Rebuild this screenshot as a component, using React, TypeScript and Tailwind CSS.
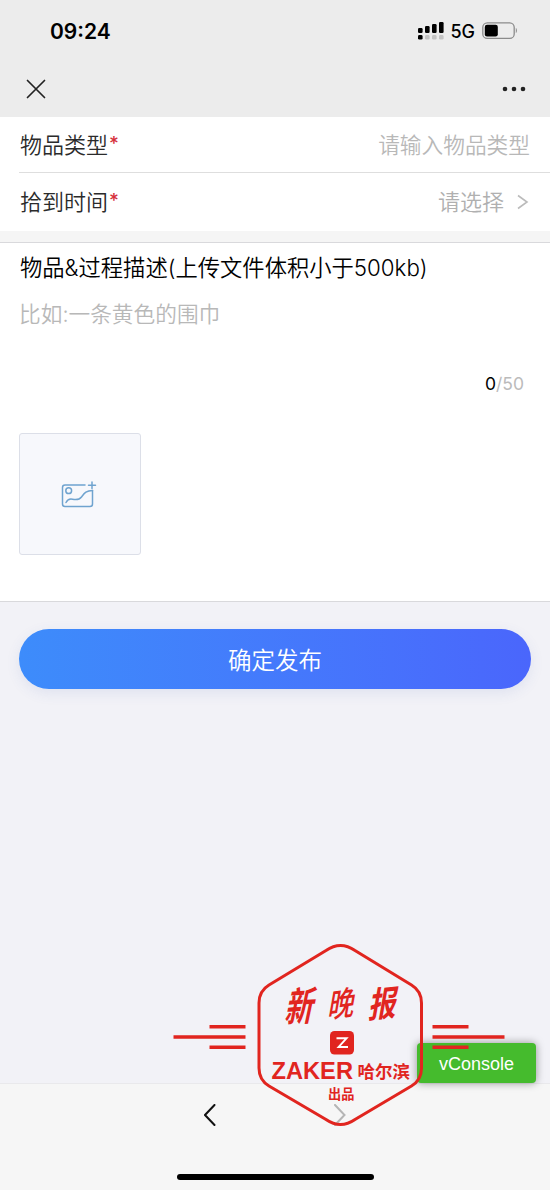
import { useState } from "react";

const CJK = "font-['Inter','Noto_Sans_CJK_SC',sans-serif]";

const SIGNAL_BARS = [
  { x: 0, y: 6, h: 5, dot: "#000" },
  { x: 7, y: 4, h: 7, dot: "#c4c4c4" },
  { x: 14, y: 2, h: 9, dot: "#c4c4c4" },
  { x: 21, y: 0, h: 11, dot: "#c4c4c4" },
];

const StatusBar = () => (
  <div className="flex h-[62px] items-center justify-between pl-[50px] pr-8">
    <span className="text-[21px] font-semibold leading-none text-black">09:24</span>
    <div className="flex items-center">
      <svg width="26" height="18" viewBox="0 0 26 18">
        {SIGNAL_BARS.map((bar) => (
          <g key={bar.x}>
            <rect x={bar.x} y={bar.y} width="4.6" height={bar.h} rx="1.2" fill="#000" />
            <rect x={bar.x} y="13" width="4.6" height="4.6" rx="1.4" fill={bar.dot} />
          </g>
        ))}
      </svg>
      <span className="relative top-px ml-[6px] text-[18px] font-medium leading-none text-black">5G</span>
      <svg className="ml-[7px]" width="36" height="18" viewBox="0 0 36 18">
        <rect x="0.8" y="0.8" width="31.4" height="15.6" rx="4.5" fill="none" stroke="#8b8b8b" strokeWidth="1.3" />
        <rect x="2.8" y="2.8" width="13" height="11.6" rx="2.2" fill="#000" />
        <path d="M33.8 6v5c1.5-.5 1.5-4.500 0-5z" fill="#8b8b8b" />
      </svg>
    </div>
  </div>
);

const NavBar = () => (
  <div className="flex h-[55px] items-center justify-between pb-[2px] pl-[26px] pr-6">
    <button type="button" aria-label="关闭">
      <svg width="20" height="20" viewBox="0 0 20 20" fill="none" stroke="#222" strokeWidth="1.7" strokeLinecap="round">
        <path d="M1.500 1.500l17 17M18.500 1.500l-17 17" />
      </svg>
    </button>
    <button type="button" aria-label="更多">
      <svg width="24" height="6" viewBox="0 0 24 6" fill="#222">
        <circle cx="3" cy="3" r="2.300" />
        <circle cx="12" cy="3" r="2.300" />
        <circle cx="21" cy="3" r="2.300" />
      </svg>
    </button>
  </div>
);

const FieldLabel = ({ text }: { text: string }) => (
  <label className="flex text-[22px] font-[350] leading-8 text-[#2b2b2b]">
    {text}
    <span className="ml-px mt-[-1px] text-[19px] font-medium text-[#d6303c]">*</span>
  </label>
);

const ImagePlusIcon = () => (
  <svg width="36" height="28" viewBox="0 0 36 28" fill="none" stroke="#6fa3cf" strokeWidth="1.5" strokeLinecap="round" strokeLinejoin="round">
    <path d="M24 4H4a2.500 2.500 0 0 0-2.500 2.500V23A2.500 2.500 0 0 0 4 25.500h25a2.500 2.500 0 0 0 2.500-2.500V9.500" />
    <circle cx="7.700" cy="9.700" r="2.900" />
    <path d="M5 21.500c1.500-3 3.500-4 6.500-3.300 4 .9 6.500 1 9-2.200 2.700-3.500 4.500-6.500 11-6.500" />
    <path d="M31 1v6.500M27.500 4.200h7" />
  </svg>
);

const Stamp = () => (
  <svg
    className="pointer-events-none absolute left-[172px] top-[940px]"
    width="334"
    height="190"
    viewBox="172 940 334 190"
    fill="#e1251f"
  >
    <path
      d="M259 1003v65q0 12 10 18l57 33.500q14.500 10 29 0l56.500-33.500q10-6 10-18v-65q0-12-10-18l-56.500-34.500q-14.500-10-29 0l-57 34.500q-10 6-10 18z"
      fill="none"
      stroke="#e1251f"
      strokeWidth="3"
    />
    <path
      d="M209.500 1026.700h36M173.500 1037h72M209.500 1047.200h36M432.500 1026.700h36M432.500 1037h72M432.500 1047.200h36"
      stroke="#e1251f"
      strokeWidth="3.500"
    />
    <g className="font-['Noto_Sans_CJK_SC',sans-serif] font-bold">
      <text transform="translate(284 1022) rotate(-4) skewX(-16) scale(.86 1.200)" fontSize="33">新</text>
      <text transform="translate(327 1018) rotate(-8) skewX(-18) scale(.86 1.060)" fontSize="31" className="font-medium">晚</text>
      <text transform="translate(368 1018) rotate(-6) skewX(-16) scale(.9 1.120)" fontSize="31">报</text>
      <text x="357.500" y="1077.500" fontSize="17.500">哈尔滨</text>
      <text x="328" y="1099" fontSize="13.200">出品</text>
    </g>
    <rect x="330" y="1031" width="24" height="23.500" rx="4.500" />
    <path d="M336.500 1038.300h10l-7.800 8.600h9.300" fill="none" stroke="#fff" strokeWidth="2" />
    <text
      x="271.500"
      y="1079"
      fontSize="23"
      textLength="81.500"
      lengthAdjust="spacingAndGlyphs"
      className="font-['Liberation_Sans',sans-serif] font-bold"
    >
      ZAKER
    </text>
  </svg>
);

const App = () => {
  const [description, setDescription] = useState("");

  return (
    <div className={`relative flex h-[1190px] w-[550px] flex-col overflow-hidden bg-[#f2f2f7] ${CJK}`}>
      <header className="h-[117px] bg-[#ececec]">
        <StatusBar />
        <NavBar />
      </header>

      <section className="h-[125px] border-b-[11px] border-[#f5f5f5] bg-white pl-[19px]">
        <div className="flex h-14 items-center justify-between border-b border-[#dedede] pl-px pr-5">
          <FieldLabel text="物品类型" />
          <input
            type="text"
            placeholder="请输入物品类型"
            className="w-[220px] text-right text-[21.700px] font-[350] leading-8 outline-none placeholder:text-[#b8b8b8]"
          />
        </div>
        <div className="flex h-[58px] items-center justify-between pl-px pr-5">
          <FieldLabel text="拾到时间" />
          <div className="flex items-center gap-[13px] text-[22px] font-[350] leading-8 text-[#b0b0b0]">
            请选择
            <svg width="13" height="16" viewBox="0 0 13 16" fill="none" stroke="#bbb" strokeWidth="1.600">
              <path d="M1 1.500l9 6.500-9 6.500" />
            </svg>
          </div>
        </div>
      </section>

      <section className="flex h-[360px] flex-col border-y border-[#d9d9dc] bg-white px-[19px]">
        <h2 className="ml-px mt-[9px] text-[22.300px] font-[350] leading-8 text-black">
          物品&amp;过程描述(上传文件体积小于500kb)
        </h2>
        <textarea
          value={description}
          onChange={(e) => setDescription(e.target.value)}
          maxLength={50}
          placeholder="比如:一条黄色的围巾"
          className="mt-[14px] h-[68px] resize-none text-[21.700px] font-[350] leading-8 outline-none placeholder:text-[#b8b8b8]"
        />
        <p className="mr-[7px] mt-1 text-right text-[17.500px] leading-7 text-[#bbb]">
          <span className="text-black">{description.length}</span>/50
        </p>
        <button
          type="button"
          aria-label="上传图片"
          className="mt-[35px] flex size-[122px] items-center justify-center rounded-[3px] border-[1.500px] border-[#dcdfe8] bg-[#f7f8fc] pr-[2px] pt-[2px]"
        >
          <ImagePlusIcon />
        </button>
      </section>

      <button
        type="button"
        className="mx-[19px] mt-[27px] h-[60px] rounded-full bg-linear-to-r from-[#3d8cfb] to-[#4a66fc] pt-[4px] text-[23.500px] font-[350] text-white shadow-[0_4px_14px_rgba(60,90,180,0.1)]"
      >
        确定发布
      </button>

      <footer className="mt-auto flex h-[107px] flex-col items-center justify-between border-t border-[#e9e9ec] bg-[#f6f6f6] pb-[10px] pt-5">
        <div className="flex w-[142px] justify-between">
          <svg width="13" height="22" viewBox="0 0 13 22" fill="none" stroke="#111" strokeWidth="2" strokeLinecap="round">
            <path d="M10.500 1L1 11l9.500 10" />
          </svg>
          <svg width="13" height="22" viewBox="0 0 13 22" fill="none" stroke="#b5b5b5" strokeWidth="2" strokeLinecap="round">
            <path d="M2 1l9.500 10L2 21" />
          </svg>
        </div>
        <div className="h-[6px] w-[197px] rounded-full bg-black" />
      </footer>

      <button
        type="button"
        className="absolute left-[417px] top-[1043px] h-10 w-[119px] rounded bg-[#45bb2d] pt-[2px] font-['Liberation_Sans',sans-serif] text-[18px] text-white shadow-[0_0_8px_rgba(0,0,0,0.4)]"
      >
        vConsole
      </button>

      <Stamp />
    </div>
  );
};

export default App;
